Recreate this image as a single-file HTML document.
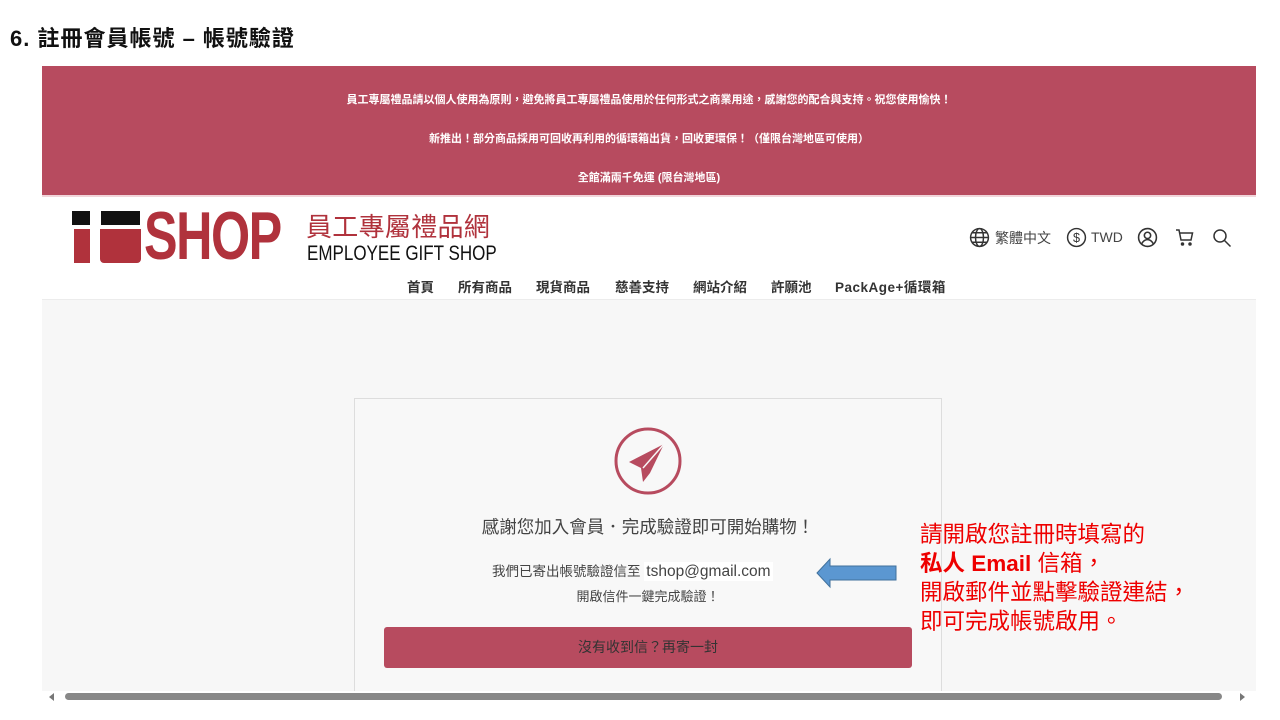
<!DOCTYPE html>
<html><head><meta charset="utf-8">
<style>
*{margin:0;padding:0;box-sizing:border-box}
body{width:1280px;height:720px;background:#fff;position:relative;overflow:hidden;font-family:"Liberation Sans","Noto Sans CJK TC",sans-serif}
.abs{position:absolute}
.title{left:10px;top:21px;font-size:22px;font-weight:bold;color:#111;letter-spacing:1px}
.banner{left:42px;top:66px;width:1214px;height:129px;background:#b74b5f;color:#fff;font-size:11px;font-weight:bold;text-align:center}
.banner div{position:absolute;left:0;right:0}
.header{left:42px;top:195px;width:1214px;height:104px;background:#fff;border-top:2px solid #f1d5da}
.gray{left:42px;top:299px;width:1214px;height:392px;background:#f7f7f7;border-top:1px solid #ececec}
.card{left:354px;top:398px;width:588px;height:293px;border:1px solid #ddd;border-bottom:none;background:#f8f8f8}
.nav{top:276px;font-size:13.5px;font-weight:bold;color:#333}
.icons{top:228px;font-size:14px;color:#444}
.red{color:#e00;font-size:22.5px;left:920px;line-height:29px;top:520px;white-space:nowrap}
</style></head><body>
<div class="abs title">6. 註冊會員帳號 – 帳號驗證</div>
<div class="abs banner">
<div style="top:25px">員工專屬禮品請以個人使用為原則，避免將員工專屬禮品使用於任何形式之商業用途，感謝您的配合與支持。祝您使用愉快！</div>
<div style="top:64px">新推出！部分商品採用可回收再利用的循環箱出貨，回收更環保！（僅限台灣地區可使用）</div>
<div style="top:103px">全館滿兩千免運 (限台灣地區)</div>
</div>
<div class="abs header"></div>
<!-- logo -->
<div class="abs" style="left:72px;top:211px;width:18px;height:14px;background:#111"></div>
<div class="abs" style="left:74px;top:229px;width:16px;height:34px;background:#b0323c"></div>
<div class="abs" style="left:101px;top:211px;width:39px;height:14px;background:#111"></div>
<div class="abs" style="left:100px;top:229px;width:41px;height:34px;background:#b0323c;border-radius:0 0 4px 4px"></div>
<div class="abs" style="left:144px;top:196px;font-size:68px;font-weight:bold;color:#b0323c;letter-spacing:-2px;transform:scaleX(0.74);transform-origin:left;line-height:80px">SHOP</div>
<div class="abs" style="left:306px;top:207px;font-size:26px;color:#b0323c;letter-spacing:0.3px">員工專屬禮品網</div>
<div class="abs" style="left:307px;top:242px;font-size:21px;color:#111;transform:scaleX(0.81);transform-origin:left;white-space:nowrap">EMPLOYEE GIFT SHOP</div>
<!-- right icons -->
<svg class="abs" style="left:969px;top:227px" width="21" height="21" viewBox="0 0 20 20" fill="none" stroke="#333" stroke-width="1.4"><circle cx="10" cy="10" r="8.5"/><ellipse cx="10" cy="10" rx="3.8" ry="8.5"/><path d="M1.5 10h17M3 5.5h14M3 14.5h14"/></svg>
<div class="abs icons" style="left:995px">繁體中文</div>
<svg class="abs" style="left:1066px;top:227px" width="21" height="21" viewBox="0 0 20 20" fill="none" stroke="#333" stroke-width="1.4"><circle cx="10" cy="10" r="8.5"/><text x="10" y="14.5" font-size="12" text-anchor="middle" fill="#333" stroke="none" font-family="Liberation Sans">$</text></svg>
<div class="abs icons" style="left:1091px;top:229px">TWD</div>
<svg class="abs" style="left:1137px;top:227px" width="21" height="21" viewBox="0 0 20 20" fill="none" stroke="#333" stroke-width="1.5"><circle cx="10" cy="10" r="8.5"/><circle cx="10" cy="8" r="3"/><path d="M4.5 16c1.5-3 3.5-4 5.5-4s4 1 5.5 4"/></svg>
<svg class="abs" style="left:1175px;top:228px" width="20" height="19" viewBox="0 0 20 19" fill="none" stroke="#333" stroke-width="1.5"><path d="M1 2h3l2 10h10l1.5-7H5"/><circle cx="7.5" cy="16" r="1" fill="#333"/><circle cx="15" cy="16" r="1" fill="#333"/></svg>
<svg class="abs" style="left:1212px;top:228px" width="20" height="20" viewBox="0 0 20 20" fill="none" stroke="#333" stroke-width="1.5"><circle cx="8" cy="8" r="6"/><path d="M12.5 12.5l6 6"/></svg>
<div class="abs nav" style="left:407px">首頁</div>
<div class="abs nav" style="left:458px">所有商品</div>
<div class="abs nav" style="left:536px">現貨商品</div>
<div class="abs nav" style="left:615px">慈善支持</div>
<div class="abs nav" style="left:693px">網站介紹</div>
<div class="abs nav" style="left:771px">許願池</div>
<div class="abs nav" style="left:835px;letter-spacing:0.5px">PackAge+循環箱</div>
<div class="abs gray"></div>
<div class="abs card"></div>
<svg class="abs" style="left:614px;top:427px" width="68" height="68" viewBox="0 0 68 68"><circle cx="34" cy="34" r="32" fill="none" stroke="#b74b5f" stroke-width="3"/><path d="M50 17L15 35l12 6 2 14 7-9z" fill="#b74b5f"/><path d="M50 17L29 41" stroke="#f8f8f8" stroke-width="1.5"/></svg>
<div class="abs" style="left:354px;width:588px;top:514px;text-align:center;font-size:17.5px;color:#444">感謝您加入會員．完成驗證即可開始購物！</div>
<div class="abs" style="left:492px;top:560px;font-size:13.5px;color:#444">我們已寄出帳號驗證信至 <span style="background:#fff;font-size:15.5px;padding:1px 2px">tshop@gmail.com</span></div>
<div class="abs" style="left:354px;width:588px;top:586px;text-align:center;font-size:13px;color:#444">開啟信件一鍵完成驗證！</div>
<div class="abs" style="left:384px;top:627px;width:528px;height:41px;background:#b74b5f;border-radius:3px;text-align:center;line-height:41px;font-size:14px;color:#333">沒有收到信？再寄一封</div>
<svg class="abs" style="left:816px;top:557px" width="82" height="32" viewBox="0 0 82 32"><path d="M1 16L14 2v7h66v14H14v7z" fill="#5b97d1" stroke="#41719c" stroke-width="1"/></svg>
<div class="abs red">請開啟您註冊時填寫的<br><b>私人 Email</b> 信箱，<br>開啟郵件並點擊驗證連結，<br>即可完成帳號啟用。</div>
<div class="abs" style="left:65px;top:693px;width:1157px;height:7px;background:#888;border-radius:4px"></div>
<div class="abs" style="left:49px;top:693px;width:0;height:0;border-top:4px solid transparent;border-bottom:4px solid transparent;border-right:5px solid #777"></div>
<div class="abs" style="left:1240px;top:693px;width:0;height:0;border-top:4px solid transparent;border-bottom:4px solid transparent;border-left:5px solid #777"></div>
</body></html>
